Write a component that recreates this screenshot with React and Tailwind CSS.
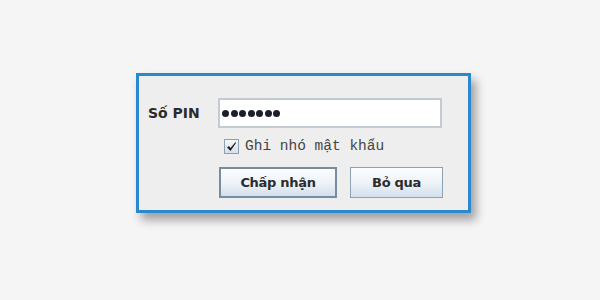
import React from "react";

const dots = [0, 1, 2, 3, 4, 5, 6];

const App = () => {
  return (
    <div className="w-[600px] h-[300px] bg-[#f5f5f5] overflow-hidden pt-[73px] pl-[136px]">
      {/* hộp thoại */}
      <div className="w-[335px] h-[140px] border-[3px] border-[#2a88cc] bg-[#eeeeee] shadow-[5px_7px_9px_rgba(0,0,0,0.35)] pt-[22px] pl-[9px]">
        <div className="flex items-center">
          <div
            className="w-[70px] text-[14px] font-bold text-[#2b2b2b]"
            style={{ fontFamily: '"DejaVu Sans", sans-serif' }}
          >
            Số PIN
          </div>
          <div className="w-[224px] h-[30px] bg-white border-2 border-[#c3cad2] flex items-center gap-[1.5px] pl-[2px]">
            {dots.map((d) => (
              <span key={d} className="w-[7px] h-[7px] rounded-full bg-[#1e1e2a]" />
            ))}
          </div>
        </div>

        <div className="mt-[11px] ml-[76px] flex items-center">
          <div className="w-[15px] h-[15px] border border-[#8e9fb1] bg-gradient-to-b from-[#f4f7fa] to-[#d8e0e8] flex items-center justify-center">
            <svg width="11" height="11" viewBox="0 0 11 11">
              <path d="M1 6.5 L3 5 L4.5 7 L9.5 1 L10 2 L4.5 10 Z" fill="#222" />
            </svg>
          </div>
          <span
            className="ml-[6px] text-[14.5px] text-[#444] leading-none"
            style={{ fontFamily: '"Liberation Mono", monospace' }}
          >
            Ghi nhó mật khẩu
          </span>
        </div>

        <div className="mt-[13px] ml-[71px] flex gap-[13px]">
          <button
            className="w-[118px] h-[31px] border-2 border-[#788ca0] bg-gradient-to-b from-[#fbfdff] via-[#eef3f8] to-[#d3e0ec] text-[13px] font-bold text-[#2b2b2b] tracking-[-0.3px]"
            style={{ fontFamily: '"DejaVu Sans", sans-serif' }}
          >
            Chấp nhận
          </button>
          <button
            className="w-[93px] h-[31px] border border-[#8ea2b6] bg-gradient-to-b from-[#fbfdff] via-[#eef3f8] to-[#d3e0ec] text-[13px] font-bold text-[#2b2b2b] tracking-[-0.3px]"
            style={{ fontFamily: '"DejaVu Sans", sans-serif' }}
          >
            Bỏ qua
          </button>
        </div>
      </div>
    </div>
  );
};

export default App;
